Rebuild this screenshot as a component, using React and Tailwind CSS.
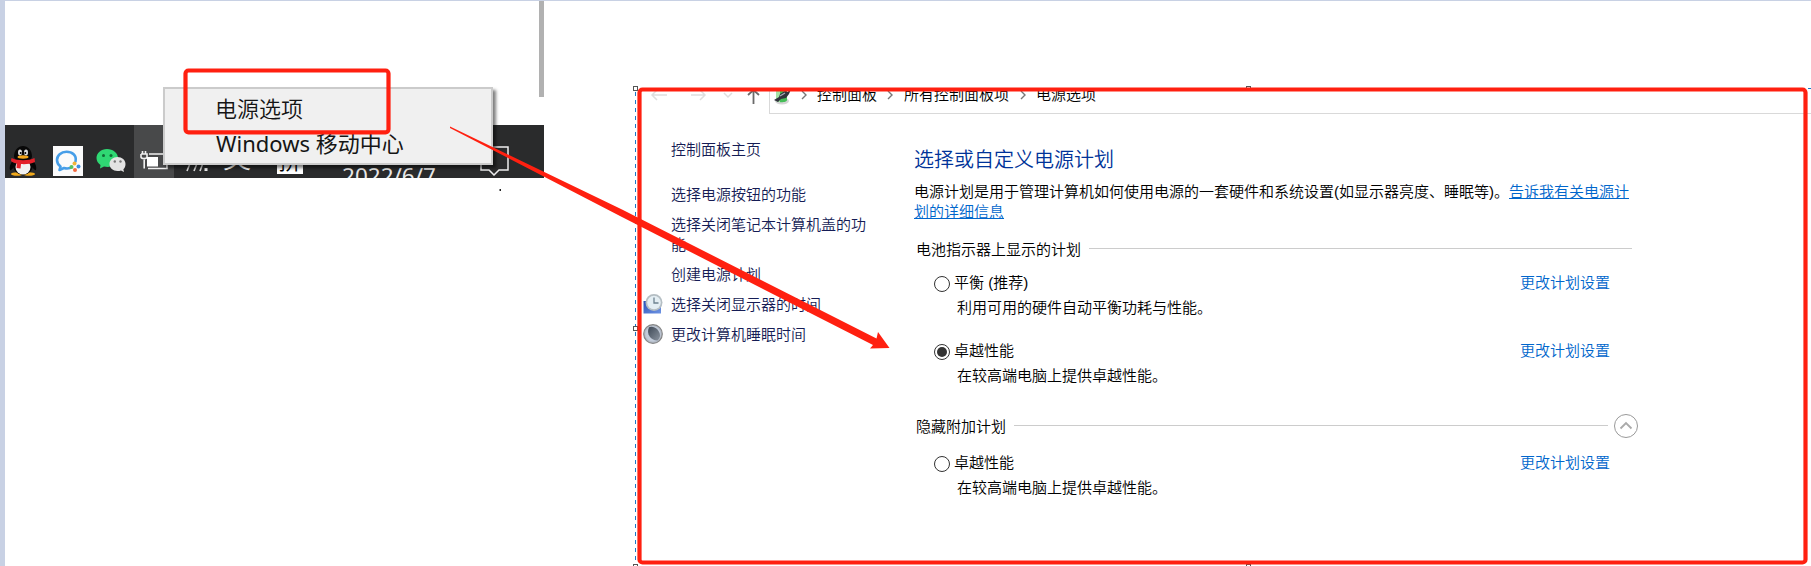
import React from "react";

const sidebarItems = [
  { text: "选择电源按钮的功能" },
  { text: "选择关闭笔记本计算机盖的功能" },
  { text: "创建电源计划" },
  { text: "选择关闭显示器的时间", icon: "clock" },
  { text: "更改计算机睡眠时间", icon: "moon" },
];

function QQIcon() {
  return (
    <svg width="28" height="30" viewBox="0 0 28 30">
      <ellipse cx="8" cy="28" rx="6" ry="1.8" fill="#f0a91c" />
      <ellipse cx="20" cy="28" rx="6" ry="1.8" fill="#f0a91c" />
      <path d="M5 13C2 17 0 20 1 24c1 1 3-2 4-3M23 13c3 4 5 7 4 11-1 1-3-2-4-3" fill="#050505" />
      <ellipse cx="14" cy="19" rx="10" ry="10" fill="#080808" />
      <ellipse cx="14" cy="21" rx="7.5" ry="7.5" fill="#f2f2f2" />
      <path d="M5 11C5 4 9 0 14 0s9 4 9 11l-2 4H7z" fill="#080808" />
      <ellipse cx="11" cy="6.5" rx="2" ry="3" fill="#ddd" />
      <ellipse cx="17" cy="6.5" rx="2" ry="3" fill="#ddd" />
      <circle cx="11.7" cy="7" r="1" fill="#000" />
      <circle cx="16.3" cy="7" r="1" fill="#000" />
      <ellipse cx="14" cy="11" rx="5.5" ry="1.7" fill="#f4a61a" />
      <path d="M2.500 12c6 3 17 3 23 0l.5 4c-4 2-10 2.500-14 2.100l-.5 4.500-4-.5.300-4.500C5 17 3 16 2 15z" fill="#e4202a" />
    </svg>
  );
}

function WeComIcon() {
  return (
    <svg width="30" height="30" viewBox="0 0 30 30">
      <rect width="30" height="30" fill="#fbfbfb" />
      <path d="M22.500 15.500C24 9 19 5.800 13.500 5.800 8 5.800 4 9.500 4 14c0 3 1.500 5 3.500 6.500L6.500 24l4.500-2c2 .6 4 .6 6 .1" fill="none" stroke="#469ee8" strokeWidth="2.600" strokeLinejoin="round" strokeLinecap="round" />
      <circle cx="21.500" cy="17.500" r="2" fill="#f2b43a" />
      <circle cx="25.500" cy="20.500" r="2" fill="#3b8de0" />
      <circle cx="22" cy="24" r="2" fill="#f26a40" />
      <circle cx="18.500" cy="21" r="2" fill="#58c15d" />
    </svg>
  );
}

function WeChatIcon() {
  return (
    <svg width="30" height="25" viewBox="0 0 30 25">
      <path d="M11 1C5 1 .5 5 .5 10c0 3 1.500 5.300 4 7L4 20.500l4-2c4 1 7 .5 10-1.500 3-2 4-4.500 4-7C22 5 17 1 11 1z" fill="#2fd873" />
      <circle cx="7.500" cy="7.500" r="1.500" fill="#116b35" />
      <circle cx="15" cy="7.500" r="1.500" fill="#116b35" />
      <path d="M21.500 9C17 9 13.500 12 13.500 16s3.500 7 8 7c1.500 0 2.500-.2 3.500-.6l3 1.600-.6-2.800c1.400-1.200 2.100-3 2.100-5.200 0-4-3.500-7-8-7z" fill="#e3e3e3" />
      <circle cx="18.800" cy="13.500" r="1.200" fill="#777" />
      <circle cx="24.500" cy="13.500" r="1.200" fill="#777" />
    </svg>
  );
}

function PlugBattery() {
  return (
    <svg width="28" height="20" viewBox="0 0 28 20" fill="none" stroke="#f0f0f0">
      <path d="M2.500 0v3M5.500 0v3M1 3h6v3c0 2-6 2-6 0V3M4.200 8.500V17.500M9 3h18v14.500H8" strokeWidth="1.600" />
      <rect x="7" y="6" width="11" height="9.500" fill="#fff" stroke="none" />
    </svg>
  );
}

function ClockIcon() {
  return (
    <svg width="20" height="20" viewBox="0 0 20 20">
      <defs>
        <linearGradient id="screen" x1="0" y1="0" x2="1" y2="1">
          <stop offset="0" stopColor="#2a50b8" />
          <stop offset="1" stopColor="#6f95e4" />
        </linearGradient>
      </defs>
      <rect x=".5" y="7" width="17.500" height="12.500" fill="url(#screen)" />
      <circle cx="11" cy="8.500" r="8.500" fill="#b5bec3" />
      <circle cx="11" cy="8.500" r="6.800" fill="#e4eef3" />
      <path d="M11 3.500v5.500h4.500" stroke="#6d8390" fill="none" strokeWidth="1.300" />
    </svg>
  );
}

function MoonIcon() {
  return (
    <svg width="20" height="20" viewBox="0 0 20 20">
      <defs>
        <linearGradient id="moonface" x1="0" y1="0" x2="1" y2="1">
          <stop offset="0" stopColor="#3d4856" />
          <stop offset="1" stopColor="#8a939e" />
        </linearGradient>
      </defs>
      <circle cx="10" cy="10" r="9.300" fill="#b4bcc8" stroke="#858585" strokeWidth="1.200" />
      <circle cx="10" cy="10" r="7.600" fill="#c3ccda" />
      <path d="M6 3.200C10.500 1 17 5.500 17 11.500c0 2-1 3.700-2.700 5C7.500 16.500 3 9.500 6 3.200z" fill="url(#moonface)" />
    </svg>
  );
}

function PowerIcon() {
  return (
    <svg width="18" height="20" viewBox="0 0 18 20">
      <ellipse cx="8" cy="16" rx="7" ry="3.500" fill="#d5d5d5" />
      <path d="M2 2h11v13c0 3-11 3-11 0z" fill="#45bd58" />
      <path d="M2 5h4v12c-2 0-4-.6-4-2z" fill="#a5e3a6" />
      <path d="M0 15l5-3 1-3 5-3 3 1 2-5h2l-3 7-3 4-5 1-3 3z" fill="#30343c" />
      <path d="M6 11l5-3" stroke="#a8adb5" strokeWidth="1.200" />
    </svg>
  );
}

function Crumb() {
  return (
    <svg width="6" height="10" viewBox="0 0 6 10" fill="none" stroke="#777" strokeWidth="1.400">
      <path d="M1 1l4 4-4 4" />
    </svg>
  );
}

function Plan({ name, note, checked }) {
  return (
    <div className="flex h-[45px] pl-[20px]">
      <div className="flex w-[586px] flex-col">
        <div className="flex h-5 items-center">
          <span className="mt-[2px] flex size-4 items-center justify-center rounded-full border border-[#333]">
            {checked && <span className="size-[10px] rounded-full bg-[#333]" />}
          </span>
          <span className="ml-1">{name}</span>
        </div>
        <span className="mt-[5px] ml-[23px]">{note}</span>
      </div>
      <a className="text-[#0066cc]">更改计划设置</a>
    </div>
  );
}

function Handle({ className }) {
  return <span className={"absolute size-[5px] border border-[#555] bg-white " + className} />;
}

export default function App() {
  return (
    <div className="relative flex h-[566px] w-[1811px] overflow-hidden border-t border-l-[5px] border-[#c8d1e4] bg-white font-['Liberation_Sans','Noto_Sans_CJK_SC',sans-serif] text-[15px] leading-5 font-[350] text-black">
      <section className="relative flex h-[177px] w-[539px] shrink-0 flex-col justify-between overflow-hidden">
        <div className="h-[96px] w-[5px] self-end bg-[#b1b1b1]" />
        <div className="flex h-[53px] items-start bg-[#2a2b2c]">
          <div className="mt-[21px] ml-[4px]"><QQIcon /></div>
          <div className="mt-[21px] ml-[16px]"><WeComIcon /></div>
          <div className="mt-[23px] ml-[13px]"><WeChatIcon /></div>
          <div className="ml-[8px] h-[53px] w-[40px] bg-[#48494a] pt-[26px] pl-[6px]"><PlugBattery /></div>
          <svg className="mt-[32px] ml-[12px]" width="24" height="16" viewBox="0 0 24 16" stroke="#ddd" strokeWidth="1.600" fill="none">
            <path d="M1 14L5 4M8 14l4-10M14 14l3-8" />
            <rect x="18.500" y="11" width="3" height="3" fill="#eee" stroke="none" />
          </svg>
          <span className="mt-[18px] ml-[13px] h-[31px] text-[28px] leading-[31px] text-white">英</span>
          <span className="mt-[22px] ml-[26px] flex h-[27px] w-[26px] items-center justify-center overflow-hidden bg-white text-[23px] text-black">拼</span>
          <span className="mt-[36px] ml-[39px] w-[96px] font-['Noto_Sans'] text-[22.500px] leading-[30px] font-normal whitespace-nowrap text-[#e8e8e8]">2022/6/7</span>
          <svg className="mt-[21px] ml-[42px]" width="30" height="30" viewBox="0 0 30 30" fill="none" stroke="#eee" strokeWidth="1.500">
            <path d="M1 1h27v23H19l-5 5-5-5H1z" />
          </svg>
        </div>
        <div className="absolute top-[86px] left-[158px] flex h-[78px] w-[330px] flex-col border-2 border-[#cbcbcb] bg-[#f0f0f0] pt-[2px] pl-[50px] font-['Noto_Sans','Noto_Sans_CJK_SC',sans-serif] text-[22px] leading-[35px] text-[#151515] shadow-[3px_3px_3px_rgba(0,0,0,0.5)]">
          <span>电源选项</span>
          <span className="ml-px font-normal whitespace-nowrap">Windows 移动中心</span>
        </div>
      </section>

      <main className="ml-[92px] flex w-[1175px] flex-col pt-[88px]">
        <header className="flex h-[25px] overflow-hidden">
          <svg className="ml-[14px]" width="119" height="20" viewBox="0 0 119 20" fill="none" strokeWidth="1.500">
            <path d="M17 6H2m5-5L2 6l5 5M41 6h14m-5-5l5 5-5 5M74 4l4 4 4-4" stroke="#dedede" />
            <path d="M103.500 15V1m-5.500 5l5.500-5 5.500 5" stroke="#6a6a6a" strokeWidth="1.800" />
          </svg>
          <div className="flex h-[25px] flex-1 items-start border-b border-l border-[#d9d9d9] pl-1">
            <div className="-mt-[4px] flex h-5 items-center">
              <PowerIcon />
              <span className="ml-[9px]"><Crumb /></span>
              <span className="ml-[10px]">控制面板</span>
              <span className="ml-[10px]"><Crumb /></span>
              <span className="ml-[11px]">所有控制面板项</span>
              <span className="ml-[11px]"><Crumb /></span>
              <span className="ml-[10px]">电源选项</span>
            </div>
          </div>
        </header>
        <div className="flex flex-1">
          <nav className="flex w-[278px] flex-col pt-[26px] pl-[7px] text-[#151c55]">
            <span className="mb-[25px] pl-[28px]">控制面板主页</span>
            <ul className="flex flex-col gap-[10px]">
              {sidebarItems.map((item) => (
                <li key={item.text} className="flex">
                  <span className="-mt-px h-5 w-[28px] shrink-0">
                    {item.icon === "clock" && <ClockIcon />}
                    {item.icon === "moon" && <MoonIcon />}
                  </span>
                  <span className="w-[197px]">{item.text}</span>
                </li>
              ))}
            </ul>
          </nav>
          <div className="flex w-[730px] flex-col pt-[33px]">
            <h1 className="text-[20px] leading-[26px] font-[350] text-[#003399]">选择或自定义电源计划</h1>
            <p className="mt-[9px] whitespace-nowrap">
              电源计划是用于管理计算机如何使用电源的一套硬件和系统设置(如显示器亮度、睡眠等)。
              <a className="text-[#0066cc] underline">告诉我有关电源计<br />划的详细信息</a>
            </p>
            <div className="mt-[18px] ml-[2px] flex h-5 items-center gap-[8px]">
              <span>电池指示器上显示的计划</span>
              <span className="mb-[3px] h-px w-[543px] bg-[#ccc]" />
            </div>
            <div className="mt-[13px] flex flex-col gap-[23px]">
              <Plan name="平衡 (推荐)" note="利用可用的硬件自动平衡功耗与性能。" />
              <Plan name="卓越性能" note="在较高端电脑上提供卓越性能。" checked />
            </div>
            <div className="mt-[31px] ml-[2px] flex h-5 items-center">
              <span>隐藏附加计划</span>
              <span className="mb-[3px] ml-[8px] h-px w-[594px] bg-[#ccc]" />
              <svg className="-mt-[2px] ml-[6px] shrink-0" width="24" height="24" viewBox="0 0 24 24" fill="none" stroke="#999">
                <circle cx="12" cy="12" r="11.500" />
                <path d="M6.500 14.500L12 9l5.500 5.500" strokeWidth="1.800" stroke="#aaa" />
              </svg>
            </div>
            <div className="mt-[16px]">
              <Plan name="卓越性能" note="在较高端电脑上提供卓越性能。" />
            </div>
          </div>
        </div>
      </main>

      {/* selection frame and hand-drawn annotations over the windows */}
      <svg className="absolute -top-px -left-[5px]" width="1811" height="566" viewBox="0 0 1811 566" fill="none">
        <path d="M635.500 92V566" stroke="#1a78c8" strokeDasharray="4 4" />
        <path d="M1808 88.500h3" stroke="#1a78c8" />
        <rect x="499.500" y="189" width="1.500" height="2" fill="#222" />
      </svg>
      <Handle className="top-[85px] left-[628px]" />
      <Handle className="top-[325px] left-[628px]" />
      <Handle className="top-[563px] left-[628px]" />
      <Handle className="top-[85px] left-[1241px]" />
      <Handle className="top-[563px] left-[1241px]" />
      <svg className="absolute -top-px -left-[5px]" width="1811" height="566" viewBox="0 0 1811 566">
        <g fill="none" stroke="#ff2010" strokeWidth="4.200">
          <rect x="185.500" y="70.500" width="203" height="61.800" rx="3" />
          <rect x="639.500" y="89.500" width="1166" height="473" rx="3" />
        </g>
        <path d="M450 126.500L622 209.500 876.500 338.500 878 332 889.500 348 870 348.500 873 345 620 216 450 128z" fill="#ff2010" />
      </svg>
    </div>
  );
}
